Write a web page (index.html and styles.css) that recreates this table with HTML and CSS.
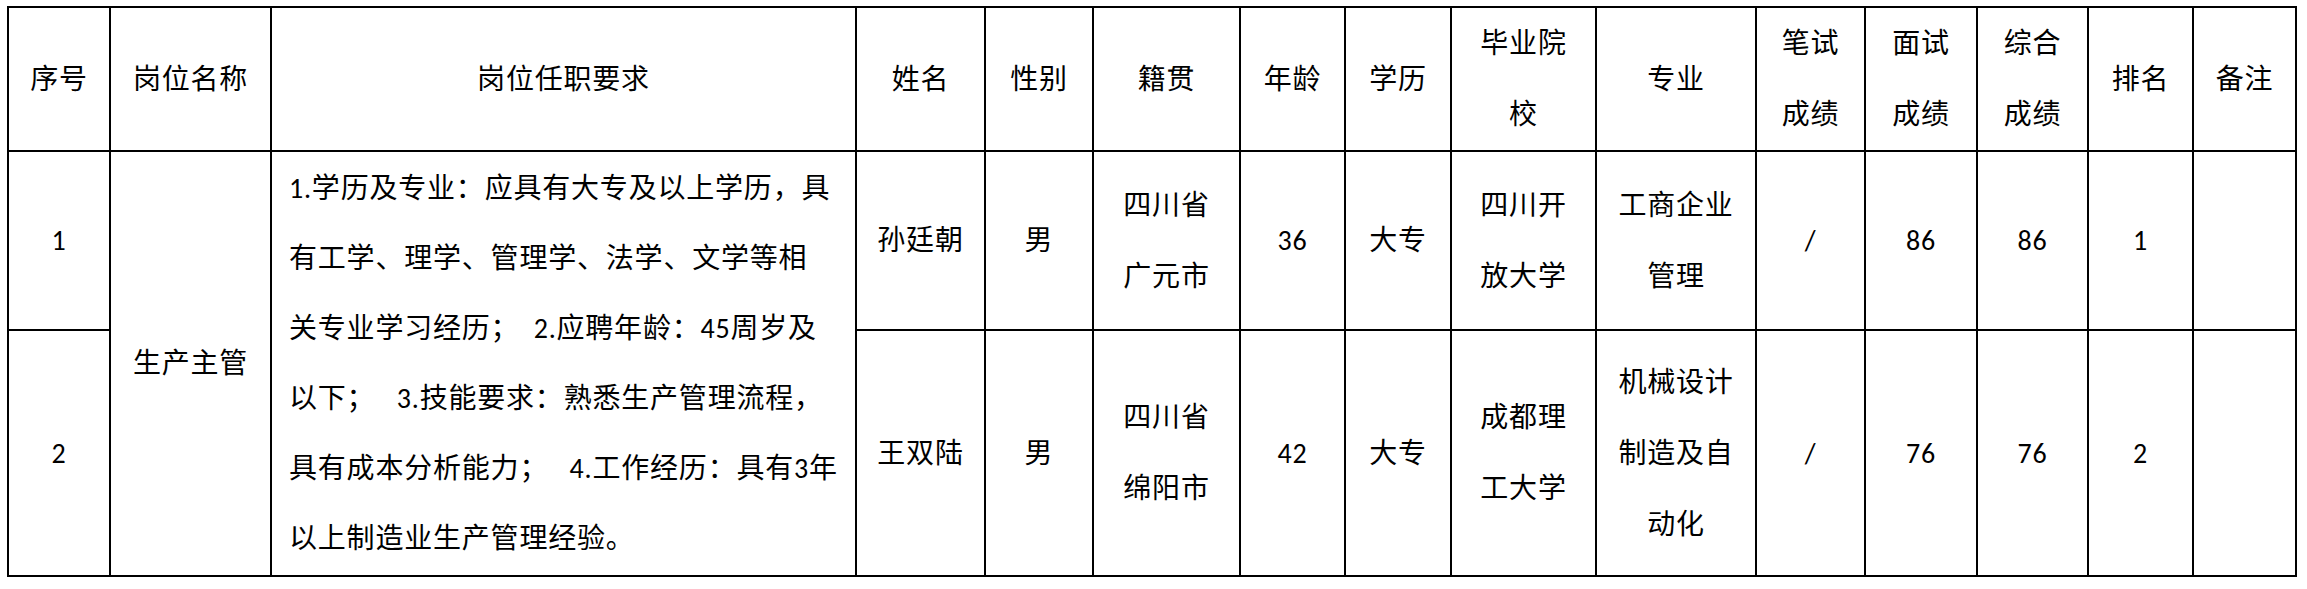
FILE: index.html
```html
<!DOCTYPE html>
<html lang="zh-CN">
<head>
<meta charset="utf-8">
<title>岗位招聘成绩表</title>
<link rel="stylesheet" href="styles.css">
</head>
<body>
<table class="sheet">
  <colgroup>
    <col class="w-no"><col class="w-post"><col class="w-req"><col class="w-name"><col class="w-sex">
    <col class="w-home"><col class="w-age"><col class="w-edu"><col class="w-school"><col class="w-major">
    <col class="w-written"><col class="w-interview"><col class="w-total"><col class="w-rank"><col class="w-note">
  </colgroup>
  <thead>
    <tr class="r-head">
      <th>序号</th>
      <th>岗位名称</th>
      <th>岗位任职要求</th>
      <th>姓名</th>
      <th>性别</th>
      <th>籍贯</th>
      <th>年龄</th>
      <th>学历</th>
      <th>毕业院<br>校</th>
      <th>专业</th>
      <th>笔试<br>成绩</th>
      <th>面试<br>成绩</th>
      <th>综合<br>成绩</th>
      <th>排名</th>
      <th>备注</th>
    </tr>
  </thead>
  <tbody>
    <tr class="r-one">
      <td>1</td>
      <td rowspan="2">生产主管</td>
      <td rowspan="2" class="req"><div class="req-line">1.学历及专业：应具有大专及以上学历，具</div><div class="req-line">有工学、理学、管理学、法学、文学等相</div><div class="req-line">关专业学习经历；&nbsp;&nbsp;2.应聘年龄：45周岁及</div><div class="req-line">以下；&nbsp;&nbsp;&nbsp;3.技能要求：熟悉生产管理流程，</div><div class="req-line">具有成本分析能力；&nbsp;&nbsp;&nbsp;4.工作经历：具有3年</div><div class="req-line">以上制造业生产管理经验。</div></td>
      <td>孙廷朝</td>
      <td>男</td>
      <td>四川省<br>广元市</td>
      <td>36</td>
      <td>大专</td>
      <td>四川开<br>放大学</td>
      <td>工商企业<br>管理</td>
      <td>/</td>
      <td>86</td>
      <td>86</td>
      <td>1</td>
      <td></td>
    </tr>
    <tr class="r-two">
      <td>2</td>
      <td>王双陆</td>
      <td>男</td>
      <td>四川省<br>绵阳市</td>
      <td>42</td>
      <td>大专</td>
      <td>成都理<br>工大学</td>
      <td>机械设计<br>制造及自<br>动化</td>
      <td>/</td>
      <td>76</td>
      <td>76</td>
      <td>2</td>
      <td></td>
    </tr>
  </tbody>
</table>
</body>
</html>
```
FILE: styles.css
```css
html, body {
  margin: 0;
  background: #ffffff;
}

.sheet {
  border-collapse: collapse;
  table-layout: fixed;
  width: 2290px;
  margin: 6px 0 0 7px;
  font-family: Carlito, Lato, "Noto Sans CJK SC", sans-serif;
  font-size: 28px;
  color: #000000;
}

.sheet th,
.sheet td {
  border: 2px solid #000000;
  padding: 0;
  text-align: center;
  vertical-align: middle;
  font-weight: 400;
  line-height: 71px;
  letter-spacing: 0.8px;
}

.r-head { height: 144px; }
.r-one { height: 179px; }
.r-two { height: 246px; }

.sheet td.req {
  text-align: left;
  padding-left: 17px;
  line-height: 70px;
}

.req-line {
  white-space: nowrap;
}

.w-no { width: 102px; }
.w-post { width: 161px; }
.w-req { width: 585px; }
.w-name { width: 129px; }
.w-sex { width: 108px; }
.w-home { width: 147px; }
.w-age { width: 105px; }
.w-edu { width: 106px; }
.w-school { width: 145px; }
.w-major { width: 160px; }
.w-written { width: 109px; }
.w-interview { width: 112px; }
.w-total { width: 111px; }
.w-rank { width: 105px; }
.w-note { width: 103px; }
```
